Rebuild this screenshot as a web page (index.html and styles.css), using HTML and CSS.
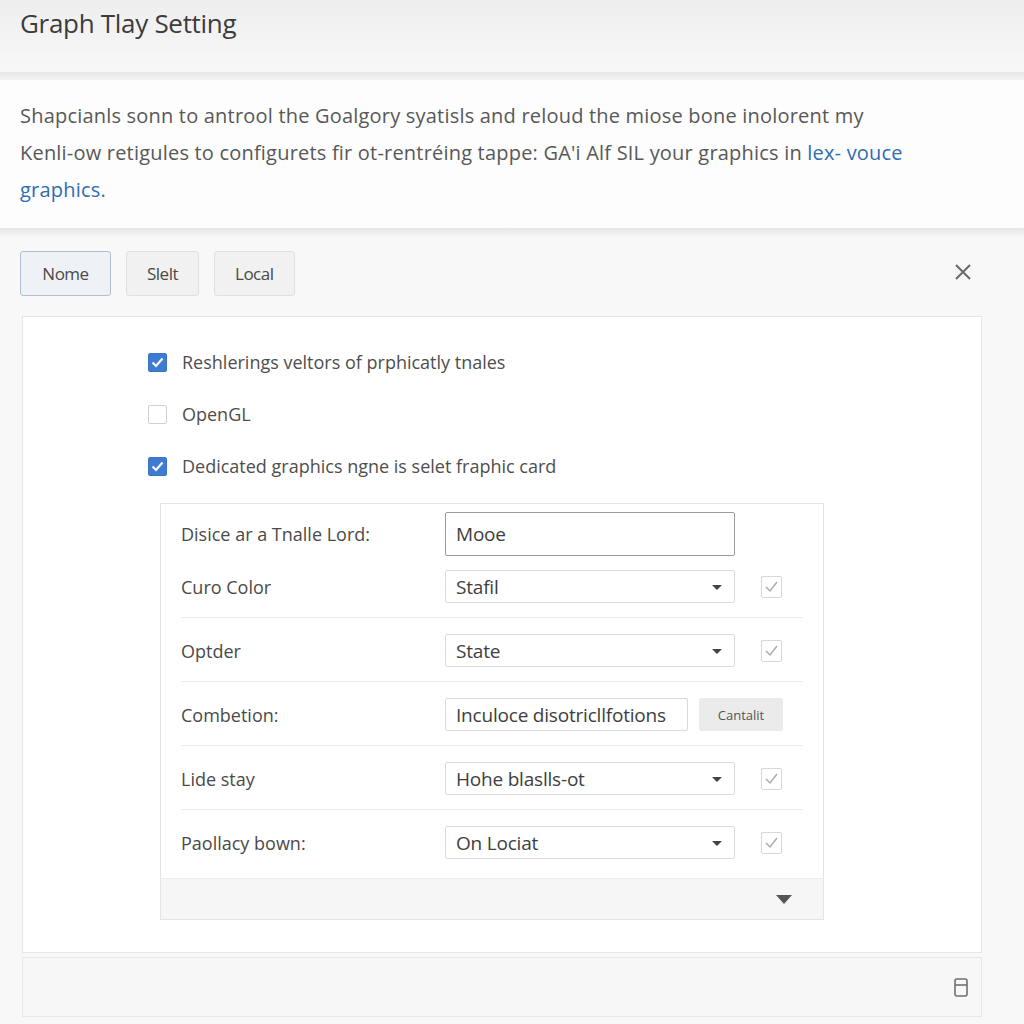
FILE: index.html
```html
<!DOCTYPE html>
<html lang="en">
  <head>
    <meta charset="UTF-8" />
    <meta name="viewport" content="width=device-width, initial-scale=1.0" />
    <title>Graph Tlay Setting</title>
    <link rel="stylesheet" href="styles.css">
  </head>
  <body>
    <header class="top">
      <h1>Graph Tlay Setting</h1>
    </header>
    <div class="rule"></div>
    <section class="intro">
      <p>Shapcianls sonn to antrool the Goalgory syatisls and reloud the miose bone inolorent my<br>
        Kenli-ow retigules to configurets fir ot-rentréing tappe: GA'i Alf SIL your graphics in <a href="#">lex- vouce<br>
        graphics.</a></p>
    </section>
    <div class="rule"></div>
    <main class="panel">
      <div class="tabs">
        <button class="tab active">Nome</button>
        <button class="tab">Slelt</button>
        <button class="tab">Local</button>
        <button class="close" title="Close">
          <svg width="18" height="18" viewBox="0 0 18 18"><path d="M2 2 L16 16 M16 2 L2 16" stroke="#6a6a6a" stroke-width="2" fill="none"/></svg>
        </button>
      </div>
      <div class="card">
        <ul class="checks">
          <li><span class="box on"></span>Reshlerings veltors of prphicatly tnales</li>
          <li><span class="box"></span>OpenGL</li>
          <li><span class="box on"></span>Dedicated graphics ngne is selet fraphic card</li>
        </ul>
        <div class="form">
          <div class="row first">
            <label>Disice ar a Tnalle Lord:</label>
            <div class="field big">Mooe</div>
          </div>
          <div class="row">
            <label>Curo Color</label>
            <div class="field select">Stafil</div>
            <span class="tick"></span>
          </div>
          <div class="row">
            <label>Optder</label>
            <div class="field select">State</div>
            <span class="tick"></span>
          </div>
          <div class="row">
            <label>Combetion:</label>
            <div class="field short">Inculoce disotricllfotions</div>
            <button class="small-btn">Cantalit</button>
          </div>
          <div class="row">
            <label>Lide stay</label>
            <div class="field select">Hohe blaslls-ot</div>
            <span class="tick"></span>
          </div>
          <div class="row last">
            <label>Paollacy bown:</label>
            <div class="field select">On Lociat</div>
            <span class="tick"></span>
          </div>
          <div class="more"><span class="down"></span></div>
        </div>
      </div>
      <div class="footer">
        <svg width="14" height="19" viewBox="0 0 14 19"><rect x="1" y="1" width="12" height="17" rx="2" stroke="#707070" stroke-width="1.6" fill="none"/><path d="M1 7 H13" stroke="#707070" stroke-width="1.6"/></svg>
      </div>
    </main>
  </body>
</html>
```
FILE: styles.css
```css
body {
  margin: 0;
  background: #f3f3f3;
  font-family: "Open Sans", "Noto Sans", sans-serif;
  color: #4a4a4a;
}
.top {
  height: 72px;
  background: linear-gradient(#eeeeee, #f8f8f8);
  padding-left: 20px;
}
.top h1 {
  margin: 0;
  padding-top: 5px;
  font-size: 26px;
  font-weight: 400;
  letter-spacing: -0.3px;
  color: #3c3c3c;
}
.rule {
  height: 8px;
  background: linear-gradient(#e6e6e6, #f4f4f4);
}
.intro {
  height: 148px;
  background: #fdfdfd;
  padding: 0 20px;
  box-sizing: border-box;
}
.intro p {
  margin: 0;
  padding-top: 17px;
  font-size: 20px;
  line-height: 37px;
  letter-spacing: 0.2px;
  color: #585858;
  white-space: nowrap;
}
.intro a {
  color: #2f6cb3;
  text-decoration: none;
}
.panel {
  background: #f8f8f8;
  padding: 15px 42px 9px 20px;
}
.tabs {
  display: flex;
  align-items: center;
  gap: 15px;
}
.tab {
  height: 45px;
  padding: 0 20px;
  font-family: inherit;
  font-size: 17px;
  letter-spacing: -0.5px;
  color: #4a4a4a;
  background: #f1f1f1;
  border: 1px solid #e0e0e0;
  border-radius: 3px;
}
.tab.active {
  width: 91px;
  background: #eef2f7;
  border-color: #b3bfcf;
}
.close {
  margin-left: auto;
  margin-right: 10px;
  background: none;
  border: none;
  padding: 0;
}
.card {
  margin: 20px 0 0 2px;
  height: 637px;
  background: #fff;
  border: 1px solid #e6e6e6;
  box-sizing: border-box;
}
.checks {
  list-style: none;
  margin: 0;
  padding: 19px 0 0 125px;
}
.checks li {
  display: flex;
  align-items: center;
  height: 52px;
  font-size: 18px;
  color: #4e4e4e;
}
.box {
  width: 19px;
  height: 19px;
  margin-right: 15px;
  border: 1px solid #d0d0d0;
  border-radius: 2px;
  box-sizing: border-box;
  background: #fff;
}
.box.on {
  border-color: #3a76c8;
  background: #3f7bd0 url("data:image/svg+xml;utf8,<svg xmlns='http://www.w3.org/2000/svg' width='19' height='19'><path d='M4.5 9.5 L8 13 L14.5 5.5' stroke='white' stroke-width='2.2' fill='none'/></svg>") center no-repeat;
}
.form {
  margin: 11px 0 0 137px;
  width: 664px;
  border: 1px solid #e4e4e4;
  box-sizing: border-box;
  padding-top: 8px;
}
.row {
  display: flex;
  align-items: center;
  margin: 0 20px;
  padding: 16px 0 14px;
  border-bottom: 1px solid #ececec;
}
.row.first {
  padding: 0;
  margin-bottom: 14px;
  border: none;
}
.row.first + .row {
  padding-top: 0;
}
.row.last {
  border: none;
  padding-bottom: 19px;
}
.row label {
  width: 264px;
  font-size: 18px;
  color: #4a4a4a;
}
.field {
  height: 33px;
  width: 290px;
  box-sizing: border-box;
  padding-left: 10px;
  display: flex;
  align-items: center;
  border: 1px solid #d9d9d9;
  border-radius: 2px;
  font-size: 19px;
  letter-spacing: -0.2px;
  color: #3e3e3e;
  background: #fff;
}
.field.big {
  height: 44px;
  border: 1px solid #9c9c9c;
}
.field.short {
  width: 243px;
}
.field.select {
  position: relative;
}
.field.select::after {
  content: "";
  position: absolute;
  right: 12px;
  top: 14px;
  border-left: 5px solid transparent;
  border-right: 5px solid transparent;
  border-top: 5px solid #444;
}
.tick {
  width: 21px;
  height: 22px;
  margin-left: 26px;
  border: 1px solid #d6d6d6;
  border-radius: 2px;
  box-sizing: border-box;
  background: url("data:image/svg+xml;utf8,<svg xmlns='http://www.w3.org/2000/svg' width='21' height='22'><path d='M5 11 L9 15 L16 6' stroke='%23a8a8a8' stroke-width='1.4' fill='none'/></svg>") center no-repeat;
}
.small-btn {
  width: 84px;
  height: 33px;
  margin-left: 11px;
  background: #ebebeb;
  border: none;
  border-radius: 2px;
  font-family: inherit;
  font-size: 13px;
  color: #555;
}
.more {
  height: 40px;
  background: #f6f6f6;
  border-top: 1px solid #ededed;
  display: flex;
  align-items: center;
  justify-content: flex-end;
  padding-right: 31px;
}
.down {
  border-left: 8px solid transparent;
  border-right: 8px solid transparent;
  border-top: 9px solid #555;
}
.footer {
  margin: 4px 0 0 2px;
  height: 60px;
  background: #f7f7f7;
  border: 1px solid #e8e8e8;
  box-sizing: border-box;
  display: flex;
  align-items: center;
  justify-content: flex-end;
  padding-right: 13px;
}
```
